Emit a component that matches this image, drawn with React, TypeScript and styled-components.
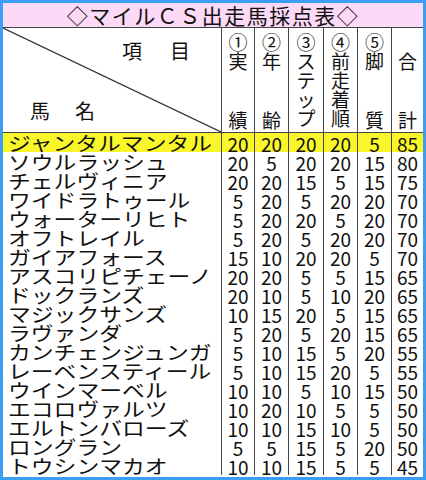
import React from 'react';
import styled, { createGlobalStyle } from 'styled-components';

const Global = createGlobalStyle`
  html, body { margin: 0; padding: 0; background: #fff; }
  body { font-family: "Noto Sans CJK JP", "Noto Sans", sans-serif; color: #111; }
`;

const Frame = styled.div`
  width: 426px;
  height: 480px;
  box-sizing: border-box;
  border: 3px solid #3a9ef5;
  background: #fff;
  display: flex;
  flex-direction: column;
  overflow: hidden;
`;

const Title = styled.div`
  height: 25px;
  box-sizing: border-box;
  background: #fcd9f6;
  border-bottom: 1px solid #444;
  display: flex;
  align-items: center;
  justify-content: center;
  font-size: 21px;
  line-height: 24px;
  letter-spacing: 1.5px;
`;

const Grid = styled.div`
  display: grid;
  grid-template-columns: 218px 33px 34px 35px 34px 34px 32px;
  grid-template-rows: 105px repeat(18, 19px);
`;

const CornerCell = styled.div`
  position: relative;
  box-sizing: border-box;
  border-bottom: 1px solid #444;
  display: flex;
  flex-direction: column;
  justify-content: space-between;
  padding: 13px 0 11px;
  font-size: 20px;
  line-height: 20px;
`;

const Diagonal = styled.svg`
  position: absolute;
  inset: 0;
  width: 100%;
  height: 100%;
`;

const CornerLabel = styled.div<{ $indent: number; $spacing: number }>`
  padding-left: ${p => p.$indent}px;
  letter-spacing: ${p => p.$spacing}px;
  white-space: nowrap;
`;

const HeadCell = styled.div`
  box-sizing: border-box;
  border-left: 1px solid #444;
  border-bottom: 1px solid #444;
  display: flex;
  flex-direction: column;
  justify-content: space-between;
  align-items: center;
  padding: 4px 0 3px;
  font-size: 19px;
  line-height: 19px;
`;

const HeadStack = styled.div`
  display: flex;
  flex-direction: column;
  align-items: center;
`;

const NameCell = styled.div<{ $hl: boolean }>`
  box-sizing: border-box;
  background: ${p => (p.$hl ? '#f9f72c' : 'transparent')};
  padding-left: 5px;
  font-size: 19px;
  line-height: 19px;
  white-space: nowrap;
  overflow: visible;
`;

const NameText = styled.span`
  display: inline-block;
  transform: scaleX(1.2);
  transform-origin: left center;
`;

const ScoreCell = styled.div<{ $hl: boolean }>`
  box-sizing: border-box;
  border-left: 1px solid #444;
  background: ${p => (p.$hl ? '#f9f72c' : 'transparent')};
  text-align: center;
  font-size: 19px;
  line-height: 19px;
  padding-top: 1px;
`;

const heads: { top: string[]; bottom: string[] }[] = [
  { top: ['①', '実'], bottom: ['績'] },
  { top: ['②', '年'], bottom: ['齢'] },
  { top: ['③', 'ス', 'テ', 'ッ', 'プ'], bottom: [] },
  { top: ['④', '前', '走', '着', '順'], bottom: [] },
  { top: ['⑤', '脚'], bottom: ['質'] },
  { top: ['\u00a0', '合'], bottom: ['計'] },
];

const rows: [string, number[]][] = [
  ['ジャンタルマンタル', [20, 20, 20, 20, 5, 85]],
  ['ソウルラッシュ', [20, 5, 20, 20, 15, 80]],
  ['チェルヴィニア', [20, 20, 15, 5, 15, 75]],
  ['ワイドラトゥール', [5, 20, 5, 20, 20, 70]],
  ['ウォーターリヒト', [5, 20, 20, 5, 20, 70]],
  ['オフトレイル', [5, 20, 5, 20, 20, 70]],
  ['ガイアフォース', [15, 10, 20, 20, 5, 70]],
  ['アスコリピチェーノ', [20, 20, 5, 5, 15, 65]],
  ['ドックランズ', [20, 10, 5, 10, 20, 65]],
  ['マジックサンズ', [10, 15, 20, 5, 15, 65]],
  ['ラヴァンダ', [5, 20, 5, 20, 15, 65]],
  ['カンチェンジュンガ', [5, 10, 15, 5, 20, 55]],
  ['レーベンスティール', [5, 10, 15, 20, 5, 55]],
  ['ウインマーベル', [10, 10, 5, 10, 15, 50]],
  ['エコロヴァルツ', [10, 20, 10, 5, 5, 50]],
  ['エルトンバローズ', [10, 10, 15, 10, 5, 50]],
  ['ロングラン', [5, 5, 15, 5, 20, 50]],
  ['トウシンマカオ', [10, 10, 15, 5, 5, 45]],
];

export default function App() {
  return (
    <>
      <Global />
      <Frame>
        <Title>◇マイルＣＳ出走馬採点表◇</Title>
        <Grid>
          <CornerCell>
            <Diagonal viewBox="0 0 218 104" preserveAspectRatio="none">
              <line x1="0" y1="0" x2="218" y2="104" stroke="#333" strokeWidth="1.2" />
            </Diagonal>
            <CornerLabel $indent={119} $spacing={4}>項　目</CornerLabel>
            <CornerLabel $indent={27} $spacing={2.5}>馬　名</CornerLabel>
          </CornerCell>
          {heads.map((h, i) => (
            <HeadCell key={i}>
              <HeadStack>
                {h.top.map((c, j) => (
                  <span key={j}>{c}</span>
                ))}
              </HeadStack>
              <HeadStack>
                {h.bottom.map((c, j) => (
                  <span key={j}>{c}</span>
                ))}
              </HeadStack>
            </HeadCell>
          ))}
          {rows.map(([name, scores], r) => (
            <React.Fragment key={name}>
              <NameCell $hl={r === 0}>
                <NameText>{name}</NameText>
              </NameCell>
              {scores.map((s, k) => (
                <ScoreCell key={k} $hl={r === 0}>
                  {s}
                </ScoreCell>
              ))}
            </React.Fragment>
          ))}
        </Grid>
      </Frame>
    </>
  );
}
